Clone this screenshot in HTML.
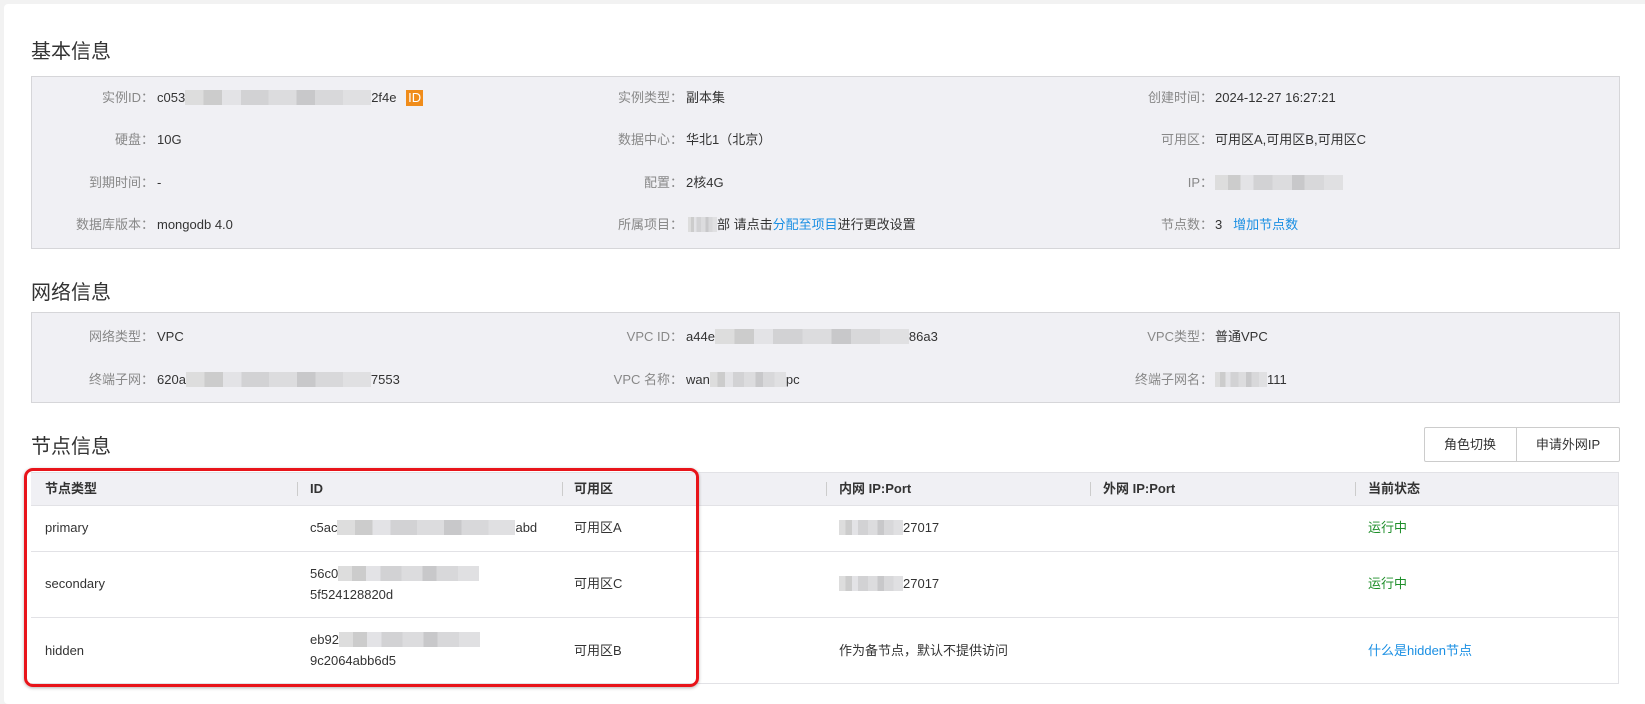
<!DOCTYPE html>
<html><head><meta charset="utf-8"><style>
*{margin:0;padding:0;box-sizing:border-box}
body{width:1645px;height:693px;background:#f2f2f2;font-family:"Liberation Sans","Noto Sans CJK SC",sans-serif;font-size:13px;color:#333;position:relative;overflow:hidden}
.card{position:absolute;left:4px;top:4px;width:1645px;height:700px;background:#fff;border-radius:4px}
.a{position:absolute;white-space:nowrap;line-height:16px}
.t{position:absolute;left:31px;font-size:20px;color:#333;line-height:24px}
.box{position:absolute;left:31px;width:1589px;background:#f0f0f4;border:1px solid #d6d6d9}
.l{color:#888;text-align:right}
.b{display:inline-block;height:15px;vertical-align:-3px;background:linear-gradient(90deg,#ddd 0 10%,#ccc 10% 20%,#e3e3e6 20% 30%,#d2d2d4 30% 45%,#dcdcde 45% 60%,#c8c8ca 60% 70%,#d8d8da 70% 85%,#e0e0e2 85%)}
.blue{color:#1a8fe3}
.green{color:#1e8e2a}
.hd{position:absolute;top:472px;left:31px;width:1588px;height:34px;background:#f0f0f4;border-top:1px solid #e2e2e6;border-bottom:1px solid #e2e2e6}
.hl{position:absolute;left:31px;width:1588px;height:1px;background:#e2e2e6}
.sep{position:absolute;top:482px;width:1px;height:14px;background:#ccc}
.h{font-weight:bold;color:#333}
</style></head><body>
<div class="card"></div>
<div class="t" style="top:40px">基本信息</div>
<div class="box" style="top:76px;height:173px"></div>
<div class="a l" style="right:1491px;top:90px">实例ID：</div>
<div class="a" style="left:157px;top:90px">c053<span class="b" style="width:186px"></span>2f4e <span style="display:inline-block;background:#f08c1a;color:#fff;padding:0 2px;height:16px;margin-left:6px">ID</span></div>
<div class="a l" style="right:962px;top:90px">实例类型：</div><div class="a" style="left:686px;top:90px">副本集</div>
<div class="a l" style="right:432px;top:90px">创建时间：</div><div class="a" style="left:1215px;top:90px">2024-12-27 16:27:21</div>

<div class="a l" style="right:1491px;top:132px">硬盘：</div><div class="a" style="left:157px;top:132px">10G</div>
<div class="a l" style="right:962px;top:132px">数据中心：</div><div class="a" style="left:686px;top:132px">华北1（北京）</div>
<div class="a l" style="right:432px;top:132px">可用区：</div><div class="a" style="left:1215px;top:132px">可用区A,可用区B,可用区C</div>

<div class="a l" style="right:1491px;top:175px">到期时间：</div><div class="a" style="left:157px;top:175px">-</div>
<div class="a l" style="right:962px;top:175px">配置：</div><div class="a" style="left:686px;top:175px">2核4G</div>
<div class="a l" style="right:432px;top:175px">IP：</div><div class="a" style="left:1215px;top:175px"><span class="b" style="width:128px"></span></div>

<div class="a l" style="right:1491px;top:217px">数据库版本：</div><div class="a" style="left:157px;top:217px">mongodb 4.0</div>
<div class="a l" style="right:962px;top:217px">所属项目：</div><div class="a" style="left:688px;top:217px"><span class="b" style="width:29px"></span>部 请点击<span class="blue">分配至项目</span>进行更改设置</div>
<div class="a l" style="right:432px;top:217px">节点数：</div><div class="a" style="left:1215px;top:217px">3 &nbsp; <span class="blue">增加节点数</span></div>

<div class="t" style="top:281px">网络信息</div>
<div class="box" style="top:312px;height:91px"></div>
<div class="a l" style="right:1491px;top:329px">网络类型：</div><div class="a" style="left:157px;top:329px">VPC</div>
<div class="a l" style="right:962px;top:329px">VPC ID：</div><div class="a" style="left:686px;top:329px">a44e<span class="b" style="width:194px"></span>86a3</div>
<div class="a l" style="right:432px;top:329px">VPC类型：</div><div class="a" style="left:1215px;top:329px">普通VPC</div>
<div class="a l" style="right:1491px;top:372px">终端子网：</div><div class="a" style="left:157px;top:372px">620a<span class="b" style="width:185px"></span>7553</div>
<div class="a l" style="right:962px;top:372px">VPC 名称：</div><div class="a" style="left:686px;top:372px">wan<span class="b" style="width:76px"></span>pc</div>
<div class="a l" style="right:432px;top:372px">终端子网名：</div><div class="a" style="left:1215px;top:372px"><span class="b" style="width:52px"></span>111</div>

<div class="t" style="top:435px">节点信息</div>
<div style="position:absolute;left:1424px;top:427px;width:196px;height:35px;border:1px solid #ccc;border-radius:2px;background:#fff"></div>
<div style="position:absolute;left:1516px;top:427px;width:1px;height:35px;background:#ccc"></div>
<div class="a" style="left:1424px;top:437px;width:92px;text-align:center">角色切换</div>
<div class="a" style="left:1516px;top:437px;width:104px;text-align:center">申请外网IP</div>

<div class="hd"></div>
<div style="position:absolute;left:1618px;top:472px;width:1px;height:211px;background:#e2e2e6"></div>
<div class="sep" style="left:297px"></div><div class="sep" style="left:562px"></div><div class="sep" style="left:826px"></div><div class="sep" style="left:1090px"></div><div class="sep" style="left:1355px"></div>
<div class="a h" style="left:45px;top:481px">节点类型</div>
<div class="a h" style="left:310px;top:481px">ID</div>
<div class="a h" style="left:574px;top:481px">可用区</div>
<div class="a h" style="left:839px;top:481px">内网 IP:Port</div>
<div class="a h" style="left:1103px;top:481px">外网 IP:Port</div>
<div class="a h" style="left:1368px;top:481px">当前状态</div>
<div class="hl" style="top:551px"></div><div class="hl" style="top:617px"></div><div class="hl" style="top:683px"></div>

<div class="a" style="left:45px;top:520px">primary</div>
<div class="a" style="left:310px;top:520px">c5ac<span class="b" style="width:178px"></span>abd</div>
<div class="a" style="left:574px;top:520px">可用区A</div>
<div class="a" style="left:839px;top:520px"><span class="b" style="width:64px"></span>27017</div>
<div class="a green" style="left:1368px;top:520px">运行中</div>

<div class="a" style="left:45px;top:576px">secondary</div>
<div class="a" style="left:310px;top:566px">56c0<span class="b" style="width:141px"></span></div>
<div class="a" style="left:310px;top:587px">5f524128820d</div>
<div class="a" style="left:574px;top:576px">可用区C</div>
<div class="a" style="left:839px;top:576px"><span class="b" style="width:64px"></span>27017</div>
<div class="a green" style="left:1368px;top:576px">运行中</div>

<div class="a" style="left:45px;top:643px">hidden</div>
<div class="a" style="left:310px;top:632px">eb92<span class="b" style="width:141px"></span></div>
<div class="a" style="left:310px;top:653px">9c2064abb6d5</div>
<div class="a" style="left:574px;top:643px">可用区B</div>
<div class="a" style="left:839px;top:643px">作为备节点，默认不提供访问</div>
<div class="a blue" style="left:1368px;top:643px">什么是hidden节点</div>

<div style="position:absolute;left:24px;top:468px;width:675px;height:219px;border:3px solid #e8141a;border-radius:9px;box-shadow:0 1px 3px rgba(0,0,0,.3)"></div>
</body></html>
